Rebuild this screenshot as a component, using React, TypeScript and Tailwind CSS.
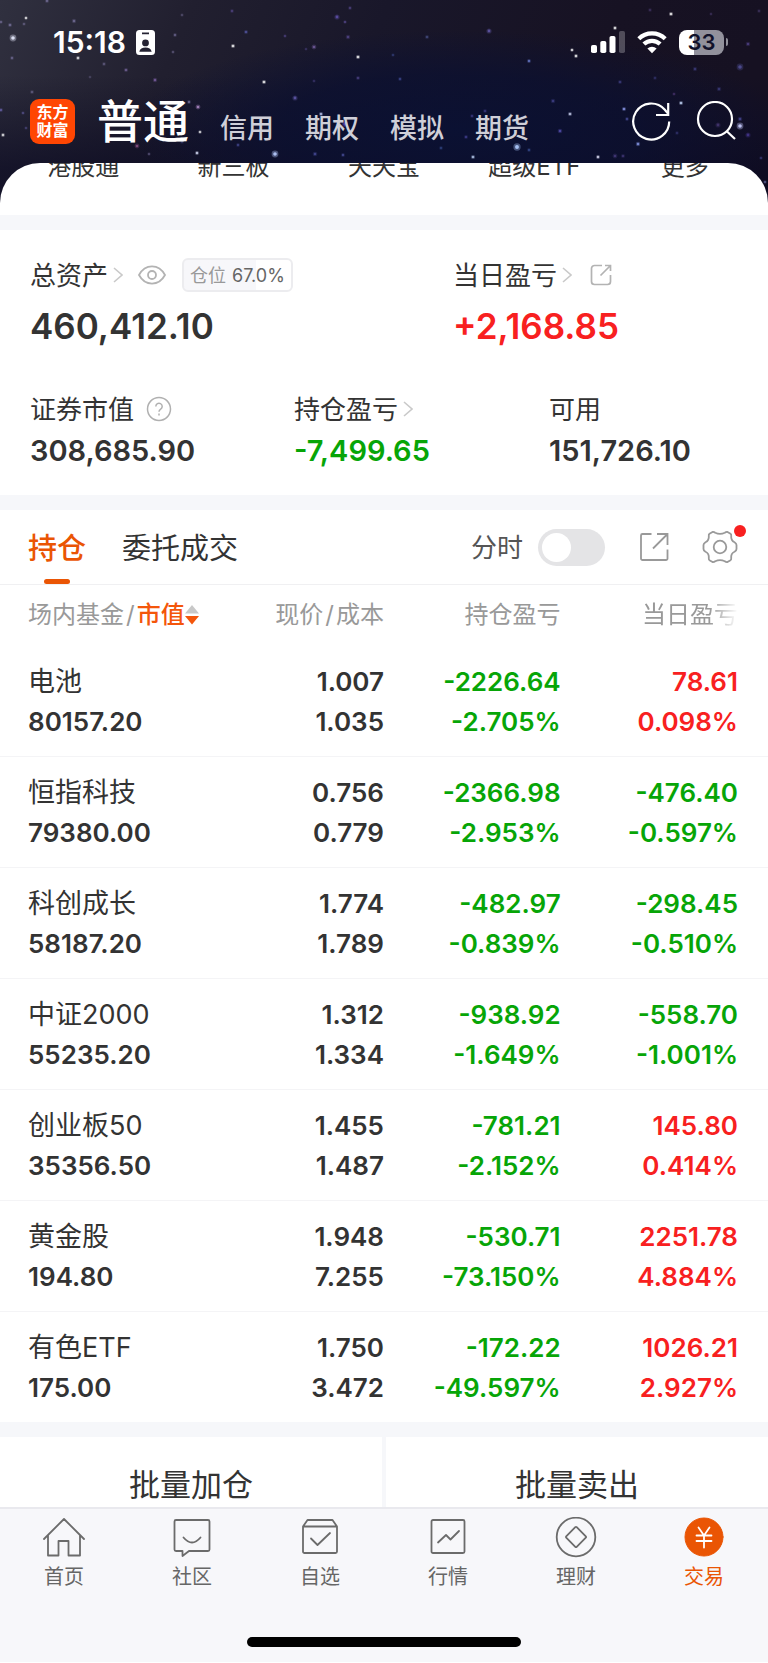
import React from "react";

type Tone = "up" | "down";

interface Holding {
  name: string;
  value: string;
  price: string;
  cost: string;
  profit: string;
  profitRate: string;
  day: string;
  dayRate: string;
  dayTone: Tone;
}

const holdings: Holding[] = [
  { name: "电池", value: "80157.20", price: "1.007", cost: "1.035", profit: "-2226.64", profitRate: "-2.705%", day: "78.61", dayRate: "0.098%", dayTone: "up" },
  { name: "恒指科技", value: "79380.00", price: "0.756", cost: "0.779", profit: "-2366.98", profitRate: "-2.953%", day: "-476.40", dayRate: "-0.597%", dayTone: "down" },
  { name: "科创成长", value: "58187.20", price: "1.774", cost: "1.789", profit: "-482.97", profitRate: "-0.839%", day: "-298.45", dayRate: "-0.510%", dayTone: "down" },
  { name: "中证2000", value: "55235.20", price: "1.312", cost: "1.334", profit: "-938.92", profitRate: "-1.649%", day: "-558.70", dayRate: "-1.001%", dayTone: "down" },
  { name: "创业板50", value: "35356.50", price: "1.455", cost: "1.487", profit: "-781.21", profitRate: "-2.152%", day: "145.80", dayRate: "0.414%", dayTone: "up" },
  { name: "黄金股", value: "194.80", price: "1.948", cost: "7.255", profit: "-530.71", profitRate: "-73.150%", day: "2251.78", dayRate: "4.884%", dayTone: "up" },
  { name: "有色ETF", value: "175.00", price: "1.750", cost: "3.472", profit: "-172.22", profitRate: "-49.597%", day: "1026.21", dayRate: "2.927%", dayTone: "up" },
];

const toneClass: Record<Tone, string> = { up: "text-[#f82020]", down: "text-[#07a507]" };

/* x, y, radius, colour, opacity */
const stars: [number, number, number, string, number][] = [
  [13, 38, 2.6, "#e8ecff", 1], [26, 18, 1.3, "#fff", 1], [10, 25, 1.6, "#8d86b8", 0.7], [24, 24, 1.4, "#8d86b8", 0.5],
  [1, 22, 1.4, "#8d86b8", 0.6], [47, 1, 1.6, "#8d86b8", 0.6], [74, 21, 1.7, "#8d86b8", 0.6], [12, 58, 1.5, "#8d86b8", 0.6],
  [78, 58, 1.5, "#fff", 0.9], [126, 70, 1.6, "#8d78b8", 0.7], [104, 64, 1.5, "#8d86b8", 0.5], [155, 80, 1.7, "#8d6cb8", 0.7],
  [90, 77, 1.2, "#8d86b8", 0.4], [175, 35, 1.5, "#8d86b8", 0.6], [182, 15, 1.4, "#8d86b8", 0.4], [173, 52, 1.3, "#8d86b8", 0.5],
  [232, 11, 1.5, "#6656a8", 0.6], [246, 32, 1.6, "#5d61b8", 0.8], [233, 46, 1.6, "#fff", 1], [264, 82, 1.6, "#fff", 1],
  [285, 36, 1.3, "#6656a8", 0.6], [314, 47, 1.9, "#7a62a8", 0.8], [306, 49, 1.2, "#6656a8", 0.5], [337, 17, 2, "#6656b8", 0.8],
  [350, 8, 1.5, "#6656a8", 0.6], [345, 22, 1.4, "#6656a8", 0.7], [348, 37, 1.8, "#6656a8", 0.6], [358, 57, 1.6, "#fff", 1],
  [358, 78, 1.6, "#6656a8", 0.6], [314, 81, 1.4, "#6656a8", 0.4], [295, 98, 2, "#6a60b8", 0.8], [32, 92, 1.6, "#8d86b8", 0.5],
  [1, 110, 1.5, "#7a72c8", 0.7], [3, 135, 1.5, "#fff", 0.9], [23, 113, 1.4, "#7a72c8", 0.5], [26, 128, 1.4, "#7a72c8", 0.4],
  [189, 102, 1.5, "#8d86b8", 0.7], [198, 107, 1.9, "#b08ac8", 0.9], [200, 132, 1.4, "#fff", 0.9], [197, 153, 1.5, "#dfe6ff", 1],
  [137, 146, 1.9, "#a45f9a", 0.7], [149, 154, 1.3, "#8d86b8", 0.5], [182, 142, 1.6, "#5560a8", 0.4], [275, 154, 2.6, "#b8ccff", 1],
  [315, 154, 1.8, "#5a60b8", 0.6], [343, 155, 1.5, "#5a60b8", 0.7], [238, 145, 1.5, "#5a60b8", 0.6], [321, 114, 1.6, "#c8d4ff", 0.9],
  [345, 124, 2.4, "#6a4fc8", 0.8], [427, 37, 1.6, "#5a66a8", 0.6], [489, 31, 2, "#6a60b8", 0.8], [529, 61, 1.5, "#7084d8", 0.9],
  [572, 50, 1.4, "#fff", 1], [576, 56, 1.5, "#fff", 1], [615, 28, 1.5, "#fff", 1], [671, 14, 1.6, "#fff", 1],
  [650, 10, 1.6, "#5a4a88", 0.5], [711, 14, 1.3, "#5a4a88", 0.5], [759, 11, 1.5, "#5a4a88", 0.5], [748, 44, 1.8, "#5a4a98", 0.7],
  [740, 67, 2.6, "#5a58a8", 0.8], [695, 69, 1.7, "#4a4a98", 0.6], [620, 82, 1.6, "#4a4a98", 0.7], [655, 78, 1.5, "#4a4a98", 0.5],
  [400, 79, 1.5, "#4a58a8", 0.7], [393, 55, 1.4, "#4a58a8", 0.5], [719, 89, 1.8, "#4a4a98", 0.6], [674, 94, 1.4, "#6a4a98", 0.5],
  [553, 101, 1.8, "#4a4a98", 0.7], [570, 114, 1.6, "#d8e0ff", 0.9], [624, 109, 1.6, "#9aa8ff", 0.9], [627, 119, 1.5, "#5a60b8", 0.7],
  [681, 103, 1.6, "#c8dcff", 1], [560, 131, 1.8, "#5a54b8", 0.8], [472, 116, 1.5, "#5a54b8", 0.5], [485, 111, 1.6, "#5a54b8", 0.5],
  [517, 147, 2.8, "#b0ccff", 1], [529, 150, 1.5, "#4a68b8", 0.6], [473, 157, 1.6, "#c8dcff", 0.9], [441, 148, 1.5, "#4a68b8", 0.5],
  [466, 137, 1.6, "#5a54b8", 0.6], [638, 144, 1.7, "#8898e8", 0.9], [598, 157, 1.5, "#e8e8ff", 1], [615, 156, 1.9, "#5a4a98", 0.6],
  [623, 156, 1.6, "#5a4a98", 0.6], [740, 126, 2.6, "#c8ccff", 1], [740, 119, 1.8, "#4a4a98", 0.8], [748, 135, 2, "#4a3a98", 0.8],
  [718, 125, 2, "#4a3a78", 0.8], [677, 133, 1.5, "#4a4a98", 0.5], [761, 158, 1.4, "#4a4a98", 0.6], [765, 182, 1.4, "#8088c8", 0.6],
];

function Starfield() {
  return (
    <svg className="absolute inset-0 h-full w-full" viewBox="0 0 768 215" preserveAspectRatio="xMidYMin slice" aria-hidden="true">
      <defs>
        <linearGradient id="sky" x1="0" y1="0" x2="1" y2="0.12">
          <stop offset="0" stopColor="#30303f" />
          <stop offset="0.25" stopColor="#211f2f" />
          <stop offset="0.5" stopColor="#19172a" />
          <stop offset="0.8" stopColor="#171223" />
          <stop offset="1" stopColor="#161122" />
        </linearGradient>
        <radialGradient id="blue" cx="0.5" cy="0.5" r="0.5">
          <stop offset="0" stopColor="#0a1134" stopOpacity="0.9" />
          <stop offset="0.55" stopColor="#0b1031" stopOpacity="0.75" />
          <stop offset="1" stopColor="#0b1033" stopOpacity="0" />
        </radialGradient>
        <linearGradient id="dusk" x1="0" y1="0" x2="0" y2="1">
          <stop offset="0.35" stopColor="#0b0a22" stopOpacity="0" />
          <stop offset="0.8" stopColor="#0b0a22" stopOpacity="0.7" />
        </linearGradient>
      </defs>
      <rect width="768" height="215" fill="url(#sky)" />
      <rect width="768" height="215" fill="url(#dusk)" />
      <ellipse cx="460" cy="130" rx="330" ry="100" fill="url(#blue)" />
      {stars.map(([x, y, r, color, opacity]) => (
        <g key={`${x}-${y}`} fill={color}>
          <circle cx={x} cy={y} r={r * 1.3} opacity={opacity * 0.35} />
          <circle cx={x} cy={y} r={r * 0.7} opacity={opacity * 0.9} />
        </g>
      ))}
    </svg>
  );
}

function Chevron() {
  return (
    <svg className="h-4 w-[10px] shrink-0" viewBox="0 0 10 16" fill="none" stroke="#c9c9c9" strokeWidth="1.6" aria-hidden="true">
      <path d="M1 1l8 7-8 7" />
    </svg>
  );
}

function StatusBar() {
  return (
    <div className="flex h-9 items-center pr-10 pl-[53px]">
      <span className="text-[30px] leading-9 font-semibold">15:18</span>
      <svg className="ml-[10px] h-[25px] w-[19px]" viewBox="0 0 19 25" aria-hidden="true">
        <path fill="#fff" fillRule="evenodd" d="M3.500 0h12A3.500 3.500 0 0 1 19 3.500v18a3.500 3.500 0 0 1-3.500 3.500h-12A3.500 3.500 0 0 1 0 21.500v-18A3.500 3.500 0 0 1 3.500 0ZM6 2.600v1.600h7V2.600ZM9.500 9.500a3.400 3.400 0 1 0 0 6.800 3.400 3.400 0 0 0 0-6.800ZM3.300 21.800h12.400c-.6-2.800-3-4.200-6.200-4.200s-5.600 1.400-6.200 4.200Z" />
      </svg>
      <div className="ml-auto flex items-center gap-3">
        <svg className="h-6 w-[34px]" viewBox="0 0 34 24" fill="#fff" aria-hidden="true">
          <rect x="0" y="15" width="6" height="8" rx="1.800" />
          <rect x="9.300" y="11" width="6" height="12" rx="1.800" />
          <rect x="18.500" y="6" width="6" height="17" rx="1.800" />
          <rect x="28" y="1" width="6" height="22" rx="1.800" opacity="0.250" />
        </svg>
        <svg className="h-6 w-[30px]" viewBox="0 0 30 24" aria-hidden="true">
          <g fill="none" stroke="#fff" strokeWidth="4.200">
            <path d="M1.800 8.700a19 19 0 0 1 26.400 0" />
            <path d="M6.900 14.100a11.600 11.600 0 0 1 16.200 0" />
          </g>
          <path fill="#fff" d="M15 23.200l-4.600-4.700a6.600 6.600 0 0 1 9.200 0Z" />
        </svg>
        <div className="flex items-center gap-[2px]">
          <div className="flex h-[25px] w-[45px] items-center justify-center rounded-[8px] bg-linear-to-r from-white from-33% to-[#92919c] to-33% text-[22px] leading-none font-semibold text-[#11122b]">
            33
          </div>
          <div className="h-2 w-[2px] rounded-r-full bg-[#92919c]" />
        </div>
      </div>
    </div>
  );
}

function TopNav() {
  return (
    <div className="mt-7 flex h-[66px] items-center pr-8 pl-[30px]">
      <div className="flex h-[45px] w-[45px] shrink-0 flex-col items-center justify-center rounded-[9px] bg-[#ff4603] text-[16px] leading-[18px] font-bold">
        <span>东方</span>
        <span>财富</span>
      </div>
      <nav className="ml-[22px] flex items-baseline gap-[31px] whitespace-nowrap">
        <a href="#normal" className="text-[46px] leading-[60px] font-medium">普通</a>
        {["信用", "期权", "模拟", "期货"].map((label) => (
          <a key={label} href={`#${label}`} className="text-[27px] font-medium text-[#cfcfd8]">{label}</a>
        ))}
      </nav>
      <div className="ml-auto flex gap-[25px]">
        <button type="button" aria-label="刷新">
          <svg className="h-10 w-10" viewBox="0 0 40 40" fill="none" stroke="#fff" strokeWidth="2.200">
            <path d="M38.200 20.500A18 18 0 1 1 33.600 8.500L37 12.500" />
            <path d="M37.200 2v12H25" />
          </svg>
        </button>
        <button type="button" aria-label="搜索">
          <svg className="h-10 w-10" viewBox="0 0 40 40" fill="none" stroke="#fff" strokeWidth="2.200">
            <circle cx="19" cy="18" r="17" />
            <path d="M30.500 30l8.500 8" />
          </svg>
        </button>
      </div>
    </div>
  );
}

function Shortcuts() {
  return (
    <div className="mt-[9px] h-[52px] overflow-hidden rounded-t-[40px] bg-white px-2 text-[#333]">
      <div className="-mt-[14px] grid grid-cols-5 text-center text-[24px] leading-9">
        {["港股通", "新三板", "天天宝", "超级ETF", "更多"].map((label) => (
          <a key={label} href={`#${label}`}>{label}</a>
        ))}
      </div>
    </div>
  );
}

function Summary() {
  return (
    <section className="mt-[15px] bg-white pt-[25px] pb-[22px] pl-[30px] text-[26px]">
      <div className="grid grid-cols-[423fr_315fr]">
        <div>
          <div className="flex h-10 items-center">
            <span>总资产</span>
            <span className="ml-[5px] flex"><Chevron /></span>
            <button type="button" aria-label="隐藏金额" className="ml-[15px]">
              <svg className="h-5 w-7" viewBox="0 0 28 20" fill="none" stroke="#b3b3b3" strokeWidth="1.800">
                <path d="M1 10C4 4.500 8.500 1.400 14 1.400S24 4.500 27 10c-3 5.500-7.500 8.600-13 8.600S4 15.500 1 10Z" />
                <circle cx="14" cy="10" r="4" />
              </svg>
            </button>
            <span className="ml-4 flex h-[34px] items-center gap-[6px] rounded-[6px] border-2 border-[#ececef] bg-linear-to-r from-[#f7f7fa] from-67% to-white to-67% px-[6px] text-[18px] text-[#999]">
              仓位 <span className="text-[#666]">67.0%</span>
            </span>
          </div>
          <div className="mt-2 text-[35px] leading-[46px] font-semibold">460,412.10</div>
        </div>
        <div>
          <div className="flex h-10 items-center">
            <span>当日盈亏</span>
            <span className="ml-[5px] flex"><Chevron /></span>
            <button type="button" aria-label="分享当日盈亏" className="ml-[18px]">
              <svg className="h-[22px] w-[22px]" viewBox="0 0 22 22" fill="none" stroke="#b3b3b3" strokeWidth="1.700">
                <path d="M12 1.500H4.500a3 3 0 0 0-3 3v13a3 3 0 0 0 3 3h13a3 3 0 0 0 3-3V11" />
                <path d="M15 1.500h5.500V7M20.500 1.500l-10 10" />
              </svg>
            </button>
          </div>
          <div className="mt-2 text-[35px] leading-[46px] font-semibold text-[#f82020]">+2,168.85</div>
        </div>
      </div>
      <div className="mt-10 grid grid-cols-[264fr_255fr_219fr]">
        <div>
          <div className="flex h-10 items-center">
            <span>证券市值</span>
            <button type="button" aria-label="证券市值说明" className="ml-3">
              <svg className="h-[26px] w-[26px]" viewBox="0 0 26 26" fill="none" stroke="#b0b0b0" strokeWidth="1.500">
                <circle cx="13" cy="13" r="11.500" />
                <path d="M9.800 10.400a3.200 3.200 0 1 1 4.900 2.700c-1.200.8-1.700 1.300-1.700 2.700" />
                <path d="M13 17.600v2" />
              </svg>
            </button>
          </div>
          <div className="text-[29px] leading-[44px] font-semibold">308,685.90</div>
        </div>
        <div>
          <div className="flex h-10 items-center">
            <span>持仓盈亏</span>
            <span className="ml-[5px] flex"><Chevron /></span>
          </div>
          <div className="text-[29px] leading-[44px] font-semibold text-[#07a507]">-7,499.65</div>
        </div>
        <div>
          <div className="flex h-10 items-center">可用</div>
          <div className="text-[29px] leading-[44px] font-semibold">151,726.10</div>
        </div>
      </div>
    </section>
  );
}

function Tabs() {
  return (
    <div className="flex h-[75px] items-stretch border-b border-[#f0f0f2] pr-[30px] pl-7">
      <button type="button" className="relative pt-[3px] text-[29px] font-medium text-[#ea5504]">
        持仓
        <span className="absolute bottom-0 left-1/2 h-[5px] w-[26px] -translate-x-1/2 rounded-full bg-[#ea5504]" />
      </button>
      <button type="button" className="ml-9 pt-[3px] text-[29px]">委托成交</button>
      <label className="ml-auto flex cursor-pointer items-center gap-[15px] pt-px text-[26px] text-[#555]">
        分时
        <input type="checkbox" className="peer sr-only" />
        <span className="flex h-[37px] w-[67px] items-center rounded-full bg-[#e4e4e6] px-1 peer-checked:justify-end peer-checked:bg-[#ea5504]">
          <span className="h-[29px] w-[29px] rounded-full bg-white" />
        </span>
      </label>
      <button type="button" aria-label="分享持仓" className="ml-[34px]">
        <svg className="h-[30px] w-[30px]" viewBox="0 0 30 30" fill="none" stroke="#999" strokeWidth="1.800">
          <path d="M12.500 2H3.500A1.500 1.500 0 0 0 2 3.500v23A1.500 1.500 0 0 0 3.500 28H27a1.500 1.500 0 0 0 1.500-1.500V17.500" />
          <path d="M18 2h10.500v11M28.500 2L14 16.500" />
        </svg>
      </button>
      <button type="button" aria-label="设置" className="relative ml-[33px]">
        <svg className="h-9 w-9" viewBox="0 0 36 36" fill="none" stroke="#999" strokeWidth="1.800" strokeLinejoin="round">
          <path d="M10.500 3Q12 2.800 13.200 3.800Q18 6 22.800 3.800Q24 2.800 25.500 3L28.500 4.800Q29.500 5.500 29.200 7Q28.800 11.500 32.500 13.200Q34.500 14.500 34.500 16V20Q34.500 21.500 32.500 22.800Q28.800 24.500 29.200 29Q29.500 30.500 28.500 31.200L25.500 33Q24 33.200 22.800 32.200Q18 30 13.200 32.200Q12 33.200 10.500 33L7.500 31.200Q6.500 30.500 6.800 29Q7.200 24.500 3.500 22.800Q1.500 21.500 1.500 20V16Q1.500 14.500 3.500 13.200Q7.200 11.500 6.800 7Q6.500 5.500 7.500 4.800Z" />
          <circle cx="18" cy="18" r="6.300" />
        </svg>
        <span className="absolute top-[15px] -right-2 h-3 w-3 rounded-full bg-[#f82020]" />
      </button>
    </div>
  );
}

function HoldingsTable() {
  return (
    <table className="w-full table-fixed border-collapse text-[26px] leading-10 font-semibold">
      <thead>
        <tr className="h-[60px] text-right text-[24px] whitespace-nowrap text-[#999]">
          <th scope="col" className="w-[27%] pl-7 text-left font-normal">
            <button type="button" className="flex items-center">
              场内基金<span className="px-[2px]">/</span>
              <span className="font-medium text-[#f4560b]">市值</span>
              <svg className="h-5 w-[14px] shrink-0" viewBox="0 0 14 20" aria-hidden="true">
                <path fill="#c8c8c8" d="M7 0l7 8.500H0Z" />
                <path fill="#f4560b" d="M0 11h14l-7 8.500Z" />
              </svg>
            </button>
          </th>
          <th scope="col" className="w-[23%] font-normal">现价<span className="px-[2px]">/</span>成本</th>
          <th scope="col" className="w-[23%] font-normal">持仓盈亏</th>
          <th scope="col" className="w-[27%] pr-[30px] font-normal">
            <span className="[mask-image:linear-gradient(to_right,black_70%,transparent)]">当日盈亏</span>
          </th>
        </tr>
      </thead>
      <tbody>
        {holdings.map((h) => (
          <tr key={h.name} className="h-[111px] border-b border-[#f4f4f6] text-right last:border-b-0">
            <td className="pt-[3px] pl-7 text-left">
              <div className="text-[27px] font-normal">{h.name}</div>
              <div>{h.value}</div>
            </td>
            <td className="pt-[3px]">
              <div>{h.price}</div>
              <div>{h.cost}</div>
            </td>
            <td className={`pt-[3px] ${toneClass.down}`}>
              <div>{h.profit}</div>
              <div>{h.profitRate}</div>
            </td>
            <td className={`pt-[3px] pr-[30px] ${toneClass[h.dayTone]}`}>
              <div>{h.day}</div>
              <div>{h.dayRate}</div>
            </td>
          </tr>
        ))}
      </tbody>
    </table>
  );
}

const navItems: { label: string; icon: React.ReactNode }[] = [
  { label: "首页", icon: <path d="M1 22L21 2l20 20M5 18.500V38.500h10.500V24h10v14.500H37V18.500" /> },
  { label: "社区", icon: <><path d="M5 3h32a1.500 1.500 0 0 1 1.500 1.500v28A1.500 1.500 0 0 1 37 34H18l-6.500 5V34H5a1.500 1.500 0 0 1-1.500-1.500v-28A1.500 1.500 0 0 1 5 3Z" /><path d="M12.500 20.500q8.500 10 17 0" /></> },
  { label: "自选", icon: <><path d="M4 9.500L8.500 3h25L38 9.500V34.500A1.500 1.500 0 0 1 36.500 36h-31A1.500 1.500 0 0 1 4 34.500ZM4 9.500h34" /><path d="M12 21.500l6.500 6.500L31 16" /></> },
  { label: "行情", icon: <><rect x="4.500" y="3" width="33" height="33" rx="1.500" /><path d="M11 25.500l8-7.500 4.500 4.500L32 14" /></> },
  { label: "理财", icon: <><circle cx="21" cy="20" r="19.300" /><path d="M20.300 10.200q.7-.7 1.400 0l9.100 9.100q.7.7 0 1.400l-9.100 9.100q-.7.7-1.400 0l-9.100-9.100q-.7-.7 0-1.400Z" /></> },
  { label: "交易", icon: <><circle cx="21" cy="20" r="19" fill="#ea5504" stroke="#ea5504" strokeWidth="1" /><path stroke="#fff" d="M15.500 10.500l5.500 8 5.500-8M21 18v12.500M13.500 18.500h15M13.500 24h15" /></> },
];

function BottomNav() {
  return (
    <div className="flex h-[155px] flex-col items-center border-t-2 border-[#e9e9ee] bg-[#f7f7fa]">
      <nav className="grid w-full grid-cols-6 pt-2">
        {navItems.map(({ label, icon }) => (
          <a
            key={label}
            href={`#${label}`}
            aria-current={label === "交易" ? "page" : undefined}
            className="flex flex-col items-center text-[20px] leading-[38px] text-[#666] aria-[current=page]:text-[#ea5504]"
          >
            <svg className="h-[41px] w-[42px]" viewBox="0 0 42 41" fill="none" stroke="#6b6b6b" strokeWidth="1.800" strokeLinejoin="round" strokeLinecap="round" aria-hidden="true">
              {icon}
            </svg>
            {label}
          </a>
        ))}
      </nav>
      <div className="mt-auto mb-[15px] h-[10px] w-[274px] rounded-full bg-black" />
    </div>
  );
}

export default function App() {
  return (
    <div className="min-h-screen bg-white font-[Inter,'Noto_Sans_CJK_SC',sans-serif] text-[#333]">
      <header className="relative overflow-hidden pt-6 text-white">
        <Starfield />
        <div className="relative">
          <StatusBar />
          <TopNav />
          <Shortcuts />
        </div>
      </header>
      <div className="flow-root bg-[#f6f7fa]">
        <Summary />
        <main className="mt-[15px] bg-white">
          <Tabs />
          <HoldingsTable />
        </main>
        <div className="mt-[15px] grid grid-cols-2 gap-1 text-[31px] leading-[44px]">
          <button type="button" className="h-[70px] bg-white pt-[26px]">批量加仓</button>
          <button type="button" className="h-[70px] bg-white pt-[26px]">批量卖出</button>
        </div>
      </div>
      <BottomNav />
    </div>
  );
}
